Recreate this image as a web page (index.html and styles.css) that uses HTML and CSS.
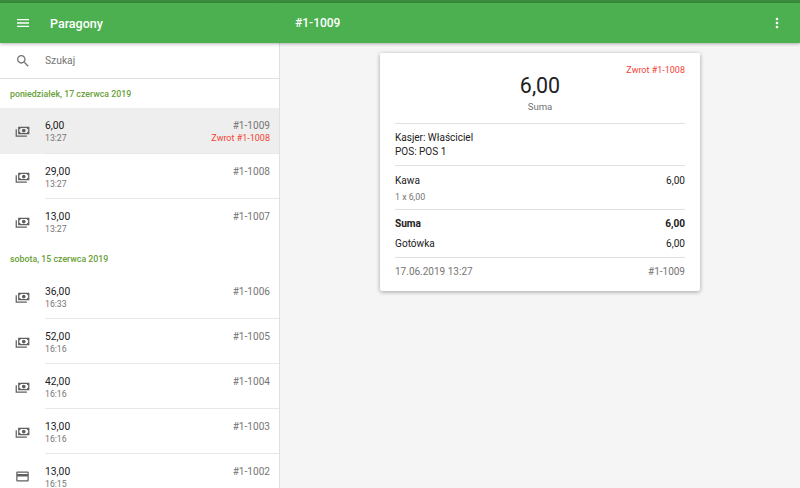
FILE: index.html
```html
<!DOCTYPE html>
<html lang="pl">
<head>
<meta charset="utf-8">
<title>Paragony</title>
<link rel="stylesheet" href="styles.css">
</head>
<body>
<svg class="defs" width="0" height="0" aria-hidden="true">
  <symbol id="cash" viewBox="0 0 24 24"><path d="M5,6H23V18H5V6M14,9A3,3 0 0,1 17,12A3,3 0 0,1 14,15A3,3 0 0,1 11,12A3,3 0 0,1 14,9M9,8A2,2 0 0,1 7,10V14A2,2 0 0,1 9,16H19A2,2 0 0,1 21,14V10A2,2 0 0,1 19,8H9M1,10H3V20H19V22H1V10Z" fill-rule="evenodd"/></symbol>
  <symbol id="card" viewBox="0 0 24 24"><path d="M20 4H4c-1.11 0-1.99.89-1.99 2L2 18c0 1.11.89 2 2 2h16c1.11 0 2-.89 2-2V6c0-1.11-.89-2-2-2zm0 14H4v-6h16v6zm0-10H4V6h16v2z"/></symbol>
</svg>
<div class="status"></div>
<header class="appbar">
  <div class="bar-left">
    <svg class="ico16 white" viewBox="0 0 24 24"><path d="M3 18h18v-2H3v2zm0-5h18v-2H3v2zm0-7v2h18V6H3z"/></svg>
    <span class="bar-title">Paragony</span>
  </div>
  <div class="bar-right">
    <span class="bar-num">#1-1009</span>
    <svg class="ico16 white" viewBox="0 0 24 24"><path d="M12 8c1.1 0 2-.9 2-2s-.9-2-2-2-2 .9-2 2 .9 2 2 2zm0 2c-1.1 0-2 .9-2 2s.9 2 2 2 2-.9 2-2-.9-2-2-2zm0 6c-1.1 0-2 .9-2 2s.9 2 2 2 2-.9 2-2-.9-2-2-2z"/></svg>
  </div>
</header>
<div class="main">
  <aside class="side">
    <div class="search">
      <svg class="ico16 grey" viewBox="0 0 24 24"><path d="M15.5 14h-.79l-.28-.27C15.41 12.59 16 11.11 16 9.5 16 5.91 13.09 3 9.5 3S3 5.91 3 9.5 5.91 16 9.500 16c1.610 0 3.090-.59 4.230-1.570l.27.28v.79l5 4.990L20.490 19l-4.990-5zm-6 0C7.010 14 5 11.990 5 9.500S7.010 5 9.500 5 14 7.010 14 9.500 11.990 14 9.500 14z"/></svg>
      <span class="search-text">Szukaj</span>
    </div>
    <div class="day">poniedziałek, 17 czerwca 2019</div>
    <div class="row selected">
      <svg class="pay"><use href="#cash"/></svg>
      <div class="row-body"><div class="col"><span class="amt">6,00</span><span class="time">13:27</span></div><div class="col right"><span class="num">#1-1009</span><span class="refund">Zwrot #1-1008</span></div></div>
    </div>
    <div class="row">
      <svg class="pay"><use href="#cash"/></svg>
      <div class="row-body"><div class="col"><span class="amt">29,00</span><span class="time">13:27</span></div><div class="col right"><span class="num">#1-1008</span></div></div>
    </div>
    <div class="row last">
      <svg class="pay"><use href="#cash"/></svg>
      <div class="row-body"><div class="col"><span class="amt">13,00</span><span class="time">13:27</span></div><div class="col right"><span class="num">#1-1007</span></div></div>
    </div>
    <div class="day day-next">sobota, 15 czerwca 2019</div>
    <div class="row">
      <svg class="pay"><use href="#cash"/></svg>
      <div class="row-body"><div class="col"><span class="amt">36,00</span><span class="time">16:33</span></div><div class="col right"><span class="num">#1-1006</span></div></div>
    </div>
    <div class="row">
      <svg class="pay"><use href="#cash"/></svg>
      <div class="row-body"><div class="col"><span class="amt">52,00</span><span class="time">16:16</span></div><div class="col right"><span class="num">#1-1005</span></div></div>
    </div>
    <div class="row">
      <svg class="pay"><use href="#cash"/></svg>
      <div class="row-body"><div class="col"><span class="amt">42,00</span><span class="time">16:16</span></div><div class="col right"><span class="num">#1-1004</span></div></div>
    </div>
    <div class="row">
      <svg class="pay"><use href="#cash"/></svg>
      <div class="row-body"><div class="col"><span class="amt">13,00</span><span class="time">16:16</span></div><div class="col right"><span class="num">#1-1003</span></div></div>
    </div>
    <div class="row">
      <svg class="pay"><use href="#card"/></svg>
      <div class="row-body"><div class="col"><span class="amt">13,00</span><span class="time">16:15</span></div><div class="col right"><span class="num">#1-1002</span></div></div>
    </div>
  </aside>
  <section class="detail">
    <article class="receipt">
      <div class="r-refund">Zwrot #1-1008</div>
      <div class="r-total">6,00</div>
      <div class="r-label">Suma</div>
      <div class="r-sec r-info"><div>Kasjer: Właściciel</div><div>POS: POS 1</div></div>
      <div class="r-sec r-items">
        <div class="r-line"><span>Kawa</span><span>6,00</span></div>
        <div class="r-sub">1 x 6,00</div>
      </div>
      <div class="r-sec r-sums">
        <div class="r-line bold"><span>Suma</span><span>6,00</span></div>
        <div class="r-line"><span>Gotówka</span><span>6,00</span></div>
      </div>
      <div class="r-sec r-foot"><span>17.06.2019 13:27</span><span>#1-1009</span></div>
    </article>
  </section>
</div>
</body>
</html>
```
FILE: styles.css
```css
* { box-sizing: border-box; }
html, body { margin: 0; height: 100%; }
body {
  width: 800px; height: 488px; overflow: hidden;
  display: flex; flex-direction: column;
  background: #f5f5f5; color: #212121;
  font-family: Roboto, "Liberation Sans", sans-serif;
}
.defs { display: block; height: 0; }
.status { height: 3px; background: #388e3c; flex: none; }
.appbar {
  height: 40px; flex: none; display: flex; background: #4caf50; color: #fff;
  box-shadow: 0 1px 3px rgba(0,0,0,.3); position: relative; z-index: 2;
}
.bar-left {
  width: 280px; display: flex; align-items: center; padding-left: 15px; gap: 19px;
  border-right: 1px solid #54a958;
}
.bar-right {
  flex: 1; display: flex; align-items: center; justify-content: space-between;
  padding: 0 15px;
}
.bar-title { font-size: 12.5px; font-weight: 500; }
.bar-num { font-size: 12px; font-weight: 500; }
.ico16 { width: 16px; height: 16px; flex: none; display: block; }
.white { fill: #fff; }
.grey { fill: #757575; }
.main { flex: 1; display: flex; min-height: 0; }
.side {
  width: 280px; flex: none; background: #fff; border-right: 1px solid #e0e0e0;
  overflow: hidden;
}
.search {
  height: 36px; display: flex; align-items: center; padding-left: 15px; gap: 14px;
  border-bottom: 1px solid #e0e0e0;
}
.search-text { font-size: 10.3px; color: #757575; }
.day {
  height: 29px; display: flex; align-items: center; padding-left: 10px;
  font-size: 8.8px; font-weight: 500; color: #689f38;
}
.day-next { height: 30px; }
.row { height: 45px; display: flex; align-items: stretch; }
.selected { background: #eee; height: 46px; }
.pay { width: 15px; height: 15px; margin: 15px 15px 0 15px; fill: #616161; flex: none; }
.row-body {
  flex: 1; display: flex; justify-content: space-between; padding: 11px 9px 0 0;
  border-bottom: 1px solid #e8e8e8;
}
.row.last .row-body { border-bottom: 0; }
.col { display: flex; flex-direction: column; }
.right { align-items: flex-end; }
.amt { font-size: 10.3px; line-height: 13px; color: #212121; }
.time { font-size: 8.7px; line-height: 12px; color: #757575; }
.num { font-size: 10.1px; line-height: 13px; color: #757575; }
.refund { font-size: 9px; line-height: 12px; color: #f44336; }
.detail { flex: 1; padding-top: 10px; display: flex; justify-content: center; align-items: flex-start; }
.receipt {
  width: 320px; background: #fff; border-radius: 2px;
  padding: 11px 15px 0; height: 238px;
  box-shadow: 0 1px 4px rgba(0,0,0,.35);
}
.r-refund { font-size: 9px; line-height: 13px; color: #f44336; text-align: right; }
.r-total { font-size: 21.4px; line-height: 25px; text-align: center; margin-top: -4px; }
.r-label { font-size: 9.6px; line-height: 13px; color: #757575; text-align: center; margin-top: 2px; }
.r-sec { border-top: 1px solid #e0e0e0; }
.r-info { margin-top: 10px; padding-top: 7px; height: 42px; font-size: 10px; line-height: 14px; }
.r-items { height: 44px; padding-top: 8px; }
.r-line { display: flex; justify-content: space-between; font-size: 10.1px; line-height: 14px; }
.r-sub { font-size: 8.8px; line-height: 12px; color: #757575; margin-top: 3px; }
.r-sums { height: 48px; padding-top: 7px; display: flex; flex-direction: column; gap: 6px; }
.bold { font-weight: 700; }
.r-foot {
  padding-top: 7px; display: flex; justify-content: space-between;
  font-size: 10px; line-height: 14px; color: #757575;
}
```
